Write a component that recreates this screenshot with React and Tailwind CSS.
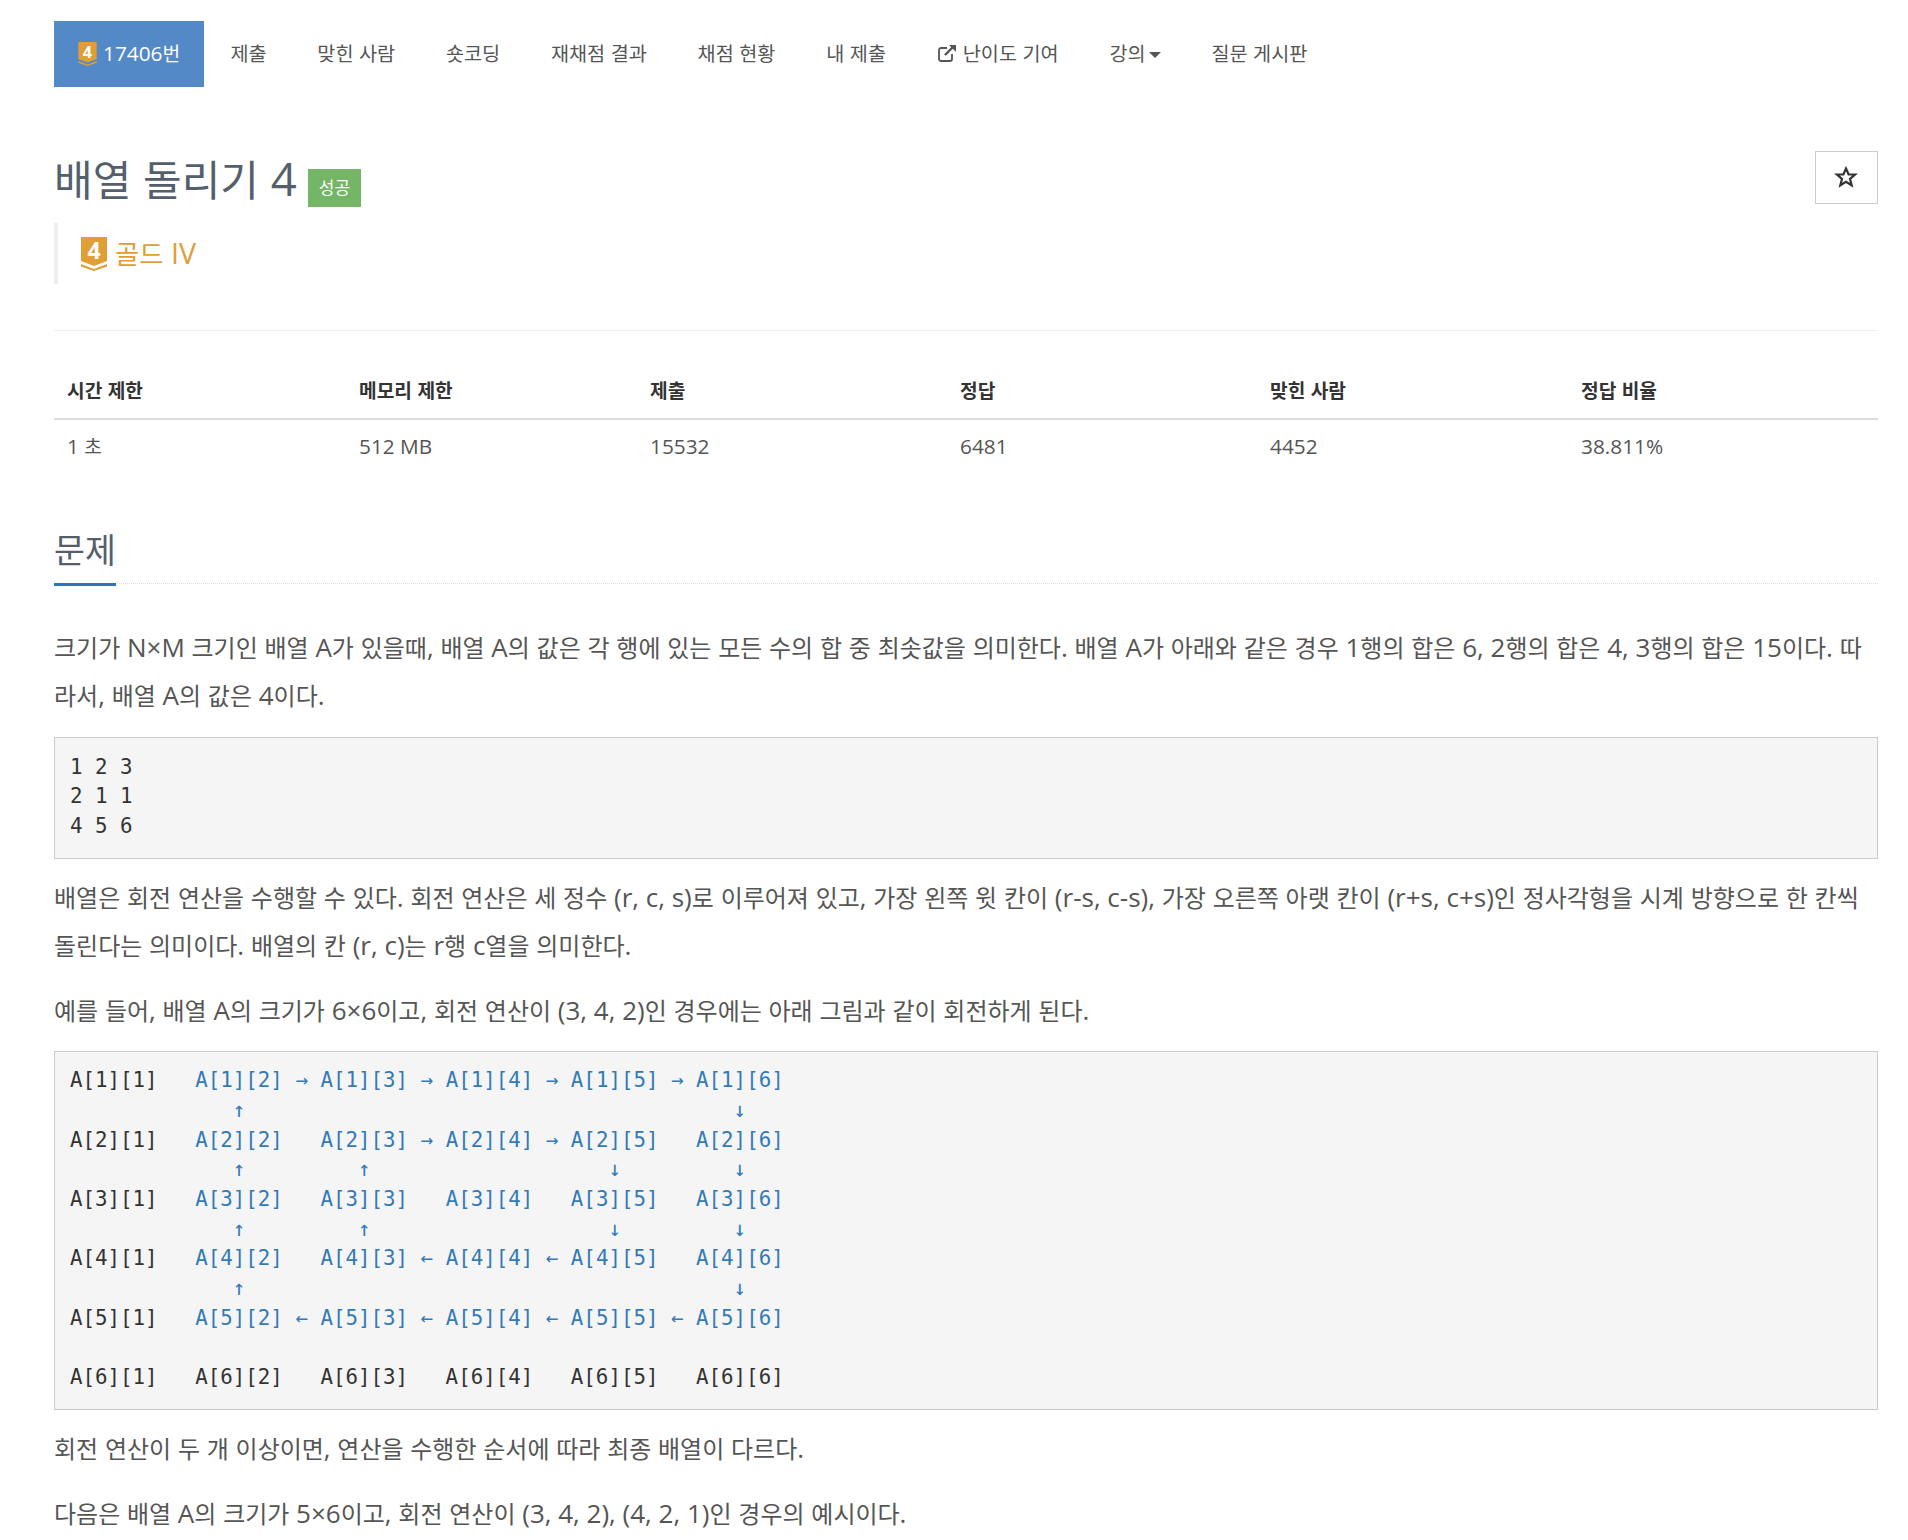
const navItems = ['제출', '맞힌 사람', '숏코딩', '재채점 결과', '채점 현황', '내 제출'];

const rotationRows = [
  ['A[1][1]   ', 'A[1][2] → A[1][3] → A[1][4] → A[1][5] → A[1][6]'],
  ['', '             ↑                                       ↓'],
  ['A[2][1]   ', 'A[2][2]   A[2][3] → A[2][4] → A[2][5]   A[2][6]'],
  ['', '             ↑         ↑                   ↓         ↓'],
  ['A[3][1]   ', 'A[3][2]   A[3][3]   A[3][4]   A[3][5]   A[3][6]'],
  ['', '             ↑         ↑                   ↓         ↓'],
  ['A[4][1]   ', 'A[4][2]   A[4][3] ← A[4][4] ← A[4][5]   A[4][6]'],
  ['', '             ↑                                       ↓'],
  ['A[5][1]   ', 'A[5][2] ← A[5][3] ← A[5][4] ← A[5][5] ← A[5][6]'],
  ['', ''],
  ['A[6][1]   A[6][2]   A[6][3]   A[6][4]   A[6][5]   A[6][6]', ''],
];

const stats = [
  ['시간 제한', '1 초', 'w-[292px]'],
  ['메모리 제한', '512 MB', 'w-[291px]'],
  ['제출', '15532', 'w-[310px]'],
  ['정답', '6481', 'w-[310px]'],
  ['맞힌 사람', '4452', 'w-[311px]'],
  ['정답 비율', '38.811%', 'flex-1'],
];

// 한글은 라틴 글자보다 살짝 작게 나온다
const Ko = ({ children }) =>
  children.split(/([\uAC00-\uD7A3]+)/).map((part, i) =>
    i % 2 ? <span key={i} className="text-[0.923em] leading-none">{part}</span> : part
  );

const TierBadge = ({ className }) => (
  <svg viewBox="0 0 26 34" className={className}>
    <path d="M0 0h26v24L13 29 0 24z" fill="#e09e37" />
    <path d="M0 27l13 5 13-5v2.500L13 34 0 29.500z" fill="#e09e37" />
    <text x="13" y="22" textAnchor="middle" fontSize="23" fontWeight="700" fill="#fff" fontFamily="'Open Sans', sans-serif">4</text>
  </svg>
);

const Para = ({ children, className = '' }) => (
  <p className={`text-[26px] leading-[48px] text-[#555] ${className}`}><Ko>{children}</Ko></p>
);

const Code = ({ children, className = '' }) => (
  <pre className={`bg-[#f5f5f5] border border-[#ccc] pl-[15px] pr-[15px] pt-[14.500px] pb-[16.500px] text-[20.8px] leading-[29.66px] text-[#333] font-['DejaVu_Sans_Mono',monospace] ${className}`}>
    {children}
  </pre>
);

export default function App() {
  return (
    <div className="h-[1540px] overflow-hidden bg-white pl-[54px] pr-[30px] pt-[21px] text-[20.8px] text-[#555] font-['Open_Sans','Noto_Sans_CJK_KR',sans-serif]">
      {/* 상단 탭 */}
      <nav className="flex h-[66px] items-center text-[21.3px]">
        <a className="mr-[1px] flex h-full w-[150px] items-center bg-[#5489c8] pb-[1px] pl-[24px] text-[20.8px] text-white">
          <TierBadge className="mr-[6px] h-[24px] w-[19px]" />
          <span><Ko>17406번</Ko></span>
        </a>
        {navItems.map((item) => (
          <a key={item} className="px-[25.400px] pb-[2px]"><Ko>{item}</Ko></a>
        ))}
        <a className="flex items-center px-[25.400px] pb-[2px]">
          <svg viewBox="0 0 20 20" className="mr-[6px] h-[20px] w-[20px]" fill="none" stroke="#555" strokeWidth="1.800">
            <path d="M15 11v5a2 2 0 0 1-2 2H4a2 2 0 0 1-2-2V7a2 2 0 0 1 2-2h6" />
            <path d="M8 12L17 3" strokeWidth="2.400" />
            <path d="M12 2h7v7z" fill="#555" stroke="none" />
          </svg>
          <span><Ko>난이도 기여</Ko></span>
        </a>
        <a className="flex items-center px-[25.400px] pb-[2px]">
          <span><Ko>강의</Ko></span>
          <span className="ml-[3px] mt-[3px] border-x-[6px] border-t-[6px] border-x-transparent border-t-[#555]" />
        </a>
        <a className="px-[25.400px] pb-[2px]"><Ko>질문 게시판</Ko></a>
      </nav>

      {/* 제목 */}
      <div className="mt-[64px] flex items-start justify-between">
        <h1 className="flex h-[56px] items-center text-[45.500px] leading-none text-[#555f6c]">
          <span><Ko>배열 돌리기 4</Ko></span>
          <span className="ml-[11px] mt-[18px] bg-[#74b566] px-[11px] py-[7px] text-[17px] leading-[24px] text-white">성공</span>
        </h1>
        <button className="flex h-[53px] w-[63px] items-center justify-center border border-[#ccc]">
          <svg viewBox="0 0 24 24" className="h-[24px] w-[24px] -translate-x-px -translate-y-px" fill="none" stroke="#333" strokeWidth="2.200" strokeLinejoin="miter">
            <path d="M12 3.500l2.600 6h6.400l-5 4.300 1.700 6.500L12 16.800l-5.700 3.500L8 13.800 3 9.500h6.400z" />
          </svg>
        </button>
      </div>

      <div className="mt-[16px] flex h-[61px] items-center border-l-[4px] border-[#eee] pl-[23px] text-[28.600px] text-[#e09e37]">
        <TierBadge className="mr-[8px] h-[34px] w-[26px]" />
        <span><Ko>골드 IV</Ko></span>
      </div>

      <hr className="mt-[46px] border-[#eee]" />

      {/* 제한 정보 */}
      <div className="mt-[33px]">
        <div className="flex h-[56px] items-center border-b-2 border-[#ddd] font-bold text-[#333]">
          {stats.map(([label, , w]) => (
            <div key={label} className={`${w} px-[13px]`}><Ko>{label}</Ko></div>
          ))}
        </div>
        <div className="flex h-[54px] items-center">
          {stats.map(([label, value, w]) => (
            <div key={label} className={`${w} px-[13px]`}><Ko>{value}</Ko></div>
          ))}
        </div>
      </div>

      {/* 문제 */}
      <div className="mt-[50.500px] flex border-b border-dotted border-[#ddd]">
        <h2 className="-mb-[3px] border-b-[3px] border-[#2e75b6] pb-[10.500px] text-[36.400px] leading-[48px] text-[#555f6c]"><Ko>문제</Ko></h2>
      </div>

      <div className="mt-[39px]">
        <Para>
          크기가 N×M 크기인 배열 A가 있을때, 배열 A의 값은 각 행에 있는 모든 수의 합 중 최솟값을 의미한다. 배열 A가 아래와 같은 경우 1행의 합은 6, 2행의 합은 4, 3행의 합은 15이다. 따라서, 배열 A의 값은 4이다.
        </Para>
        <Code className="mt-[18px]">{'1 2 3\n2 1 1\n4 5 6'}</Code>
        <Para className="mt-[14px]">
          배열은 회전 연산을 수행할 수 있다. 회전 연산은 세 정수 (r, c, s)로 이루어져 있고, 가장 왼쪽 윗 칸이 (r-s, c-s), 가장 오른쪽 아랫 칸이 (r+s, c+s)인 정사각형을 시계 방향으로 한 칸씩 돌린다는 의미이다. 배열의 칸 (r, c)는 r행 c열을 의미한다.
        </Para>
        <Para className="mt-[17px]">
          예를 들어, 배열 A의 크기가 6×6이고, 회전 연산이 (3, 4, 2)인 경우에는 아래 그림과 같이 회전하게 된다.
        </Para>
        <Code className="mt-[17px]">
          {rotationRows.map(([head, rest], i) => (
            <div key={i} className="h-[29.660px]">
              {head}
              <span className="text-[#337ab7]">{rest}</span>
            </div>
          ))}
        </Code>
        <Para className="mt-[14px]">회전 연산이 두 개 이상이면, 연산을 수행한 순서에 따라 최종 배열이 다르다.</Para>
        <Para className="mt-[17px]">다음은 배열 A의 크기가 5×6이고, 회전 연산이 (3, 4, 2), (4, 2, 1)인 경우의 예시이다.</Para>
      </div>
    </div>
  );
}
